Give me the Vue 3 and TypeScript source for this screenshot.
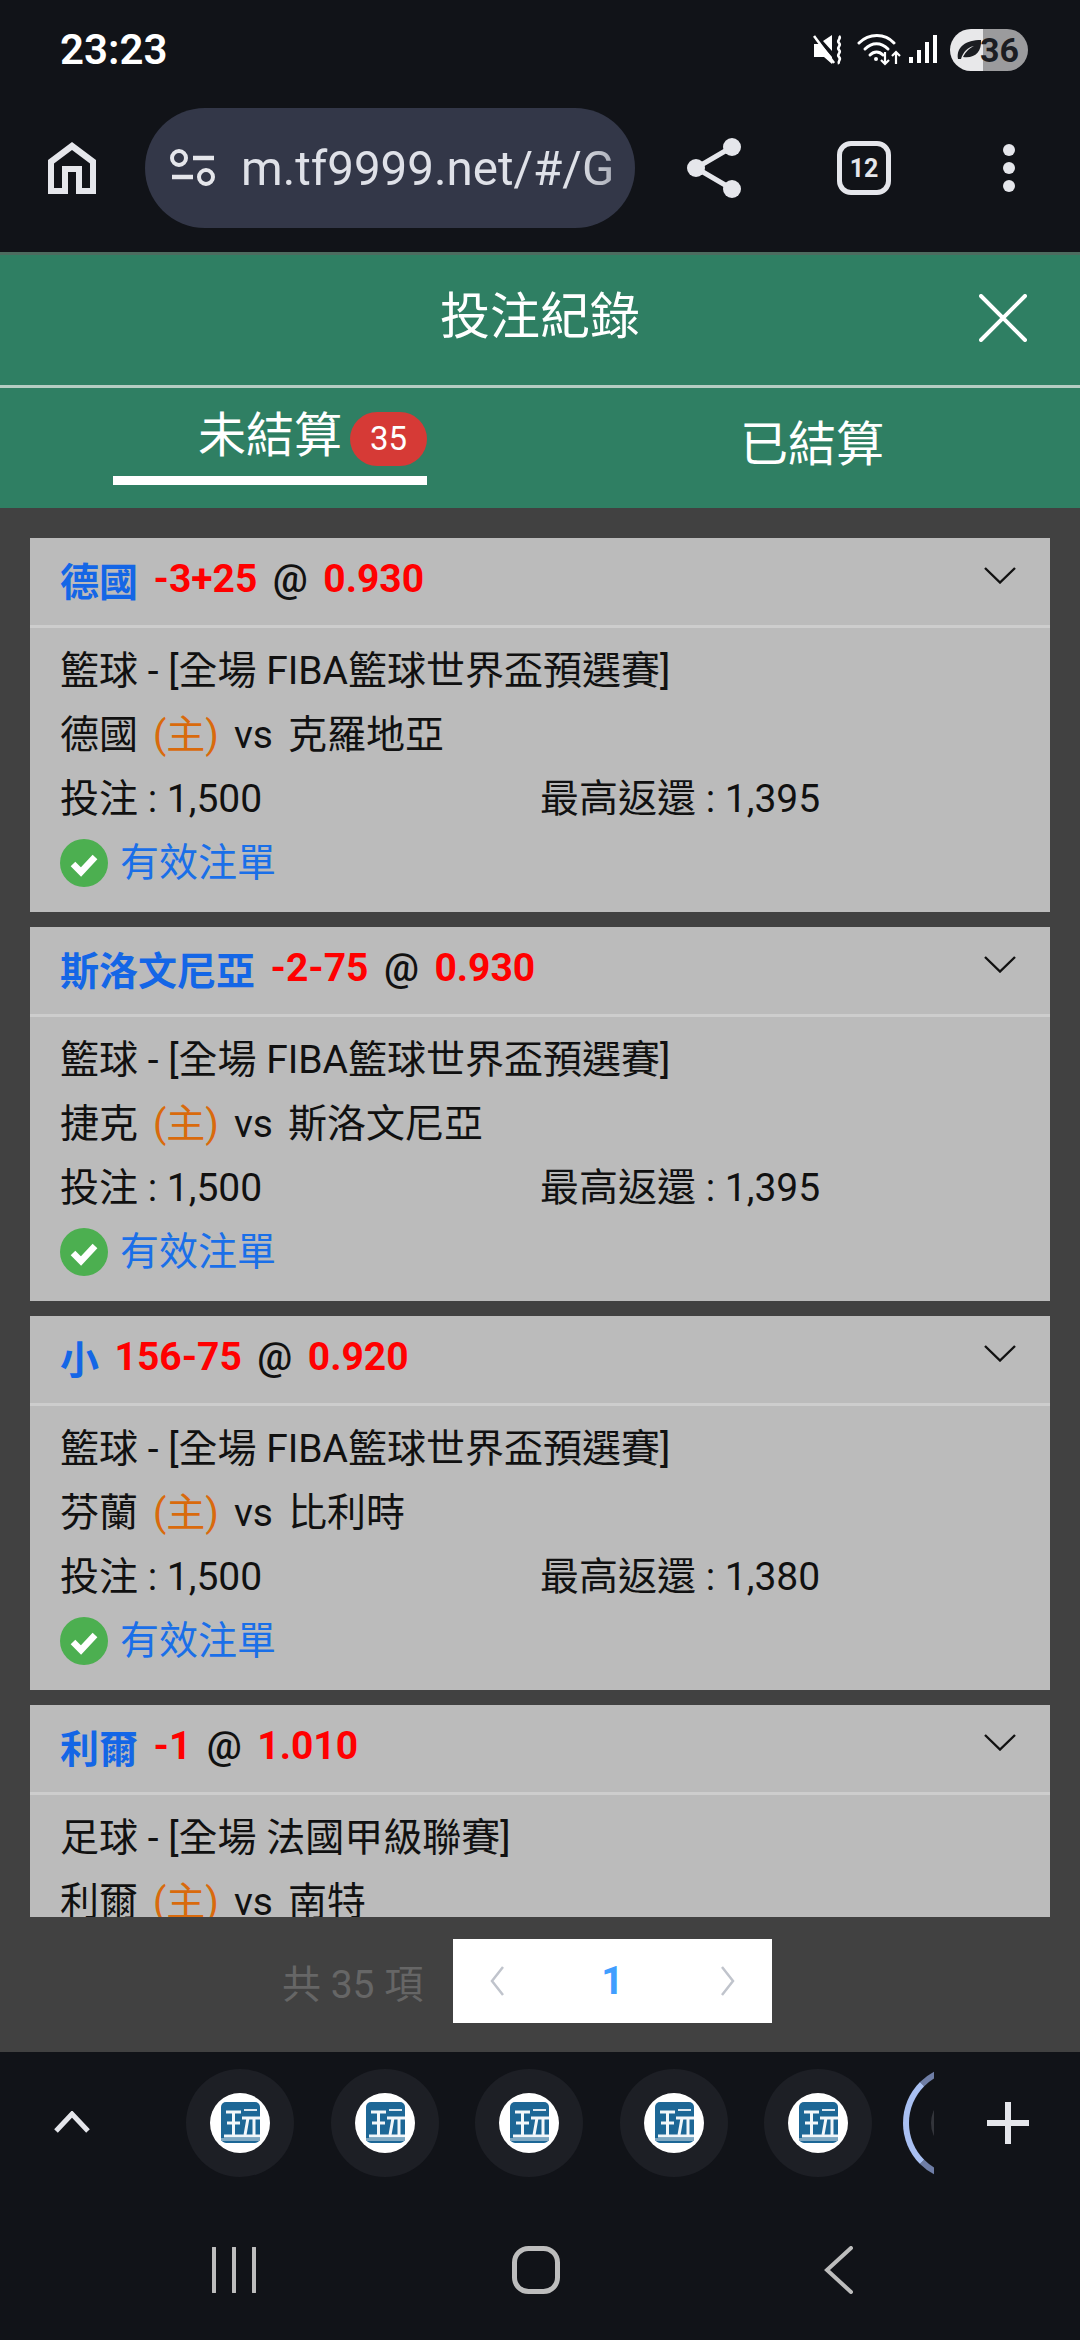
<script setup lang="ts">
interface Bet {
  pick: string
  line: string
  odds: string
  league: string
  home: string
  away: string
  stake?: string
  payout?: string
}

const bets: Bet[] = [
  { pick: '德國', line: '-3+25', odds: '0.930', league: '籃球 - [全場 FIBA籃球世界盃預選賽]', home: '德國', away: '克羅地亞', stake: '1,500', payout: '1,395' },
  { pick: '斯洛文尼亞', line: '-2-75', odds: '0.930', league: '籃球 - [全場 FIBA籃球世界盃預選賽]', home: '捷克', away: '斯洛文尼亞', stake: '1,500', payout: '1,395' },
  { pick: '小', line: '156-75', odds: '0.920', league: '籃球 - [全場 FIBA籃球世界盃預選賽]', home: '芬蘭', away: '比利時', stake: '1,500', payout: '1,380' },
  { pick: '利爾', line: '-1', odds: '1.010', league: '足球 - [全場 法國甲級聯賽]', home: '利爾', away: '南特' },
]

const tabs: number[] = [1, 2, 3, 4, 5]
</script>

<template>
  <div class="page">
    <header class="status">
      <span class="time">23:23</span>
      <div class="status-icons">
        <svg class="ic-mute" width="30" height="30" viewBox="0 0 30 30">
          <path d="M1 9h5l1-1 12 14v7l-8-7H1z M10 6l9-6v16z" fill="#fff" />
          <path d="M1 1l20 27" stroke="#fff" stroke-width="2.600" fill="none" />
          <path d="M26 1c3 3-3 4 0 7s-3 4 0 7-3 4 0 7-2 4 0 7" stroke="#fff" stroke-width="2.600" fill="none" />
        </svg>
        <svg class="ic-wifi" width="46" height="34" viewBox="0 0 46 34">
          <path d="M2 11C12 1 28 1 37 11" stroke="#fff" stroke-width="3" fill="none" stroke-linecap="round" />
          <path d="M8 17c7-7 16-7 23 0" stroke="#fff" stroke-width="3" fill="none" stroke-linecap="round" />
          <path d="M13 23c4-4 9-4 13 0" stroke="#fff" stroke-width="3" fill="none" stroke-linecap="round" />
          <circle cx="19" cy="27" r="2" fill="#fff" />
          <path d="M28 20v12M24 28l4 4 4-4M39 32V20M35 24l4-4 4 4" stroke="#fff" stroke-width="2.200" fill="none" />
        </svg>
        <svg class="ic-signal" width="28" height="30" viewBox="0 0 28 30">
          <rect x="0" y="23" width="4" height="6" fill="#fff" />
          <rect x="8" y="16" width="4" height="13" fill="#fff" />
          <rect x="16" y="8" width="4" height="21" fill="#fff" />
          <rect x="24" y="1" width="4" height="28" fill="#fff" />
        </svg>
        <div class="battery">
          <svg width="30" height="26" viewBox="0 0 30 26">
            <path d="M4 22C2 10 12 3 27 3c1 12-7 19-18 17 3-6 7-9 11-11-6 1-11 6-13 13z" fill="#1b1d22" />
          </svg>
          <span class="batt-num">36</span>
        </div>
      </div>
    </header>

    <nav class="toolbar">
      <svg class="home" width="48" height="54" viewBox="0 0 48 54">
        <path fill-rule="evenodd" d="M24 1L48 19V53H28V31H20V53H0V19z M24 9L6 22.500V47H14V25H34V47H42V22.500z" fill="#e5e6eb" />
      </svg>
      <div class="pill">
        <svg class="tune" width="46" height="38" viewBox="0 0 46 38">
          <circle cx="9" cy="9" r="7" stroke="#e5e6eb" stroke-width="4" fill="none" />
          <circle cx="36" cy="28" r="7" stroke="#e5e6eb" stroke-width="4" fill="none" />
          <path d="M23 9H44M2 28H23" stroke="#e5e6eb" stroke-width="4.500" fill="none" />
        </svg>
        <span class="url">m.tf9999.net/#/G</span>
      </div>
      <svg class="share" width="54" height="60" viewBox="0 0 54 60">
        <path d="M45 9L9 30 45 51" stroke="#e5e6eb" stroke-width="5" fill="none" />
        <circle cx="45" cy="9" r="9" fill="#e5e6eb" />
        <circle cx="9" cy="30" r="9" fill="#e5e6eb" />
        <circle cx="45" cy="51" r="9" fill="#e5e6eb" />
      </svg>
      <div class="tab-count">12</div>
      <div class="dots"><i></i><i></i><i></i></div>
    </nav>

    <main class="sheet">
      <div class="title-bar">
        <span class="title">投注紀錄</span>
        <svg class="close" width="48" height="48" viewBox="0 0 48 48">
          <path d="M2 2L46 46M46 2L2 46" stroke="#fff" stroke-width="4" stroke-linecap="round" />
        </svg>
      </div>

      <div class="tabs">
        <div class="tab-active">
          <span class="tab-label">未結算</span>
          <span class="badge">35</span>
        </div>
        <span class="tab-other">已結算</span>
      </div>

      <div class="list">
        <article v-for="bet in bets" :key="bet.pick" class="card">
          <div class="card-head">
            <span class="pick">{{ bet.pick }}</span>
            <span class="red">{{ bet.line }}</span>
            <span class="at">@</span>
            <span class="red">{{ bet.odds }}</span>
            <svg class="chev" width="32" height="17" viewBox="0 0 32 17">
              <path d="M1 1L16 15.500 31 1" stroke="#111" stroke-width="2.400" fill="none" />
            </svg>
          </div>
          <div class="card-body">
            <div class="row">{{ bet.league }}</div>
            <div class="row teams">
              <span>{{ bet.home }}</span>
              <span class="host">(主)</span>
              <span class="vs">vs</span>
              <span>{{ bet.away }}</span>
            </div>
            <template v-if="bet.stake">
              <div class="row split">
                <span>投注 : {{ bet.stake }}</span>
                <span>最高返還 : {{ bet.payout }}</span>
              </div>
              <div class="row valid">
                <svg width="48" height="48" viewBox="0 0 48 48">
                  <circle cx="24" cy="24" r="24" fill="#4caf50" />
                  <path d="M13 25l8 8 14-15" stroke="#fff" stroke-width="6.500" fill="none" />
                </svg>
                <span>有效注單</span>
              </div>
            </template>
          </div>
        </article>
      </div>

      <div class="pager">
        <span class="total">共 35 項</span>
        <div class="pager-box">
          <svg width="16" height="30" viewBox="0 0 16 30">
            <path d="M14 1L3 15l11 14" stroke="#c0c4cc" stroke-width="2.500" fill="none" />
          </svg>
          <span class="current">1</span>
          <svg width="16" height="30" viewBox="0 0 16 30">
            <path d="M2 1l11 14L2 29" stroke="#c0c4cc" stroke-width="2.500" fill="none" />
          </svg>
        </div>
      </div>
    </main>

    <section class="strip">
      <svg class="up" width="36" height="22" viewBox="0 0 36 22">
        <path d="M2 20L18 3l16 17" stroke="#e5e6eb" stroke-width="5" fill="none" />
      </svg>
      <div class="tab-scroll">
        <div v-for="t in tabs" :key="t" class="tab-circle">
          <svg width="60" height="60" viewBox="0 0 60 60">
            <circle cx="30" cy="30" r="30" fill="#fff" />
            <rect x="11" y="9" width="39" height="41" rx="5" fill="#1d6796" />
            <rect x="11" y="45" width="39" height="3" fill="#7fa8c2" />
            <path d="M16 19H31M23.500 19V42M17 30H30M14 43H50" stroke="#f3f7fa" stroke-width="3" fill="none" />
            <path d="M34 17H47" stroke="#f3f7fa" stroke-width="1.800" fill="none" />
            <path d="M32 25H50M38 25L35 42M44 25V42" stroke="#f3f7fa" stroke-width="3" fill="none" />
          </svg>
        </div>
        <div class="tab-current"><i></i></div>
      </div>
      <svg class="plus" width="42" height="42" viewBox="0 0 42 42">
        <path d="M21 0V42M0 21H42" stroke="#e5e6eb" stroke-width="6" />
      </svg>
    </section>

    <footer class="sysnav">
      <svg width="46" height="46" viewBox="0 0 46 46">
        <path d="M3 1V45M23 1V45M43 1V45" stroke="#bdbdbd" stroke-width="4" stroke-linecap="round" />
      </svg>
      <svg width="48" height="48" viewBox="0 0 48 48">
        <rect x="2.500" y="2.500" width="43" height="43" rx="14" stroke="#bdbdbd" stroke-width="5" fill="none" />
      </svg>
      <svg width="30" height="48" viewBox="0 0 30 48">
        <path d="M27 2L3 24l24 22" stroke="#bdbdbd" stroke-width="4" fill="none" stroke-linecap="round" />
      </svg>
    </footer>
  </div>
</template>

<style scoped>
.page {
  width: 1080px;
  height: 2340px;
  display: flex;
  flex-direction: column;
  background: #111318;
  overflow: hidden;
  font-family: Roboto, "Noto Sans CJK TC", sans-serif;
  color: #111;
}
.status {
  height: 84px;
  flex: none;
  display: flex;
  justify-content: space-between;
  align-items: flex-start;
  padding: 0 52px 0 60px;
}
.time {
  margin-top: 26px;
  font-size: 42px;
  line-height: 48px;
  font-weight: 600;
  color: #fff;
}
.status-icons {
  display: flex;
  align-items: center;
  margin-top: 29px;
  height: 42px;
}
.ic-mute { margin-right: 14px; }
.ic-wifi { margin-right: 6px; margin-bottom: 2px; }
.ic-signal { margin-right: 13px; margin-bottom: 2px; }
.battery {
  width: 78px;
  height: 42px;
  border-radius: 21px;
  display: flex;
  align-items: center;
  padding-left: 5px;
  box-sizing: border-box;
  background: linear-gradient(90deg, #e8e8ea 0 42%, #9b9b9d 42% 100%);
}
.battery svg { flex: none; margin-left: -1px; margin-right: -4px; }
.batt-num {
  font-size: 34px;
  font-weight: 700;
  color: #1b1d22;
  line-height: 42px;
}

.toolbar {
  height: 168px;
  flex: none;
  display: flex;
  align-items: center;
  padding-left: 48px;
  box-sizing: border-box;
}
.pill {
  margin-left: 49px;
  width: 490px;
  height: 120px;
  border-radius: 60px;
  background: #333748;
  display: flex;
  align-items: center;
  padding-left: 25px;
  box-sizing: border-box;
  overflow: hidden;
  flex: none;
}
.tune { flex: none; }
.url {
  margin-left: 25px;
  margin-top: 2px;
  font-size: 47.500px;
  color: #dfe1e8;
  white-space: nowrap;
  line-height: 60px;
  -webkit-mask-image: linear-gradient(90deg, #000 90%, rgba(0, 0, 0, 0.7));
  mask-image: linear-gradient(90deg, #000 90%, rgba(0, 0, 0, 0.7));
}
.share { margin-left: 52px; flex: none; }
.tab-count {
  margin-left: 96px;
  width: 54px;
  height: 54px;
  box-sizing: border-box;
  border: 5px solid #e5e6eb;
  border-radius: 14px;
  color: #e5e6eb;
  font-size: 25px;
  font-weight: 700;
  display: flex;
  align-items: center;
  justify-content: center;
  flex: none;
}
.dots {
  margin-left: 112px;
  display: flex;
  flex-direction: column;
  gap: 6px;
}
.dots i {
  display: block;
  width: 12px;
  height: 12px;
  border-radius: 50%;
  background: #e5e6eb;
}

.sheet {
  flex: none;
  height: 1800px;
  display: flex;
  flex-direction: column;
  background: #414141;
  border-top: 3px solid #4d6b5f;
  box-sizing: border-box;
}
.title-bar {
  height: 130px;
  flex: none;
  background: #2f7f63;
  display: flex;
  align-items: center;
  justify-content: center;
  position: relative;
  border-bottom: 3px solid #b5cdc3;
  box-sizing: content-box;
}
.title {
  font-size: 50px;
  line-height: 60px;
  color: #fff;
  margin-top: -6px;
}
.close {
  position: absolute;
  right: 53px;
  top: 39px;
}
.tabs {
  height: 120px;
  flex: none;
  background: #2f7f63;
  display: flex;
  color: #fff;
  font-size: 48px;
  position: relative;
}
.tab-active {
  margin-left: 113px;
  width: 314px;
  height: 97px;
  border-bottom: 9px solid #fff;
  box-sizing: border-box;
  display: flex;
  align-items: flex-start;
  padding-left: 85px;
}
.tab-label {
  line-height: 60px;
  margin-top: 18px;
  white-space: nowrap;
}
.badge {
  margin-left: 8px;
  margin-top: 24px;
  width: 77px;
  height: 54px;
  border-radius: 27px;
  background: #d63a36;
  font-size: 33px;
  line-height: 54px;
  text-align: center;
  flex: none;
}
.tab-other {
  margin-left: 313px;
  line-height: 60px;
  margin-top: 27px;
  height: 60px;
  white-space: nowrap;
}

.list {
  flex: 1;
  min-height: 0;
  overflow: hidden;
  padding: 30px 30px 0;
  display: flex;
  flex-direction: column;
  gap: 15px;
}
.card {
  flex: none;
  background: #bbbbbb;
  height: 374px;
}
.card-head {
  height: 87px;
  box-sizing: content-box;
  border-bottom: 3px solid #cdcdcd;
  display: flex;
  align-items: center;
  padding: 0 34px 0 30px;
  font-size: 39px;
  font-weight: 700;
  gap: 15.500px;
}
.card-head > * { position: relative; top: -3px; }
.pick { color: #1466e6; }
.red { color: #f00; }
.at { color: #111; font-weight: 500; }
.chev { margin-left: auto; margin-bottom: 6px; }
.card-body {
  padding: 11px 30px 0;
  font-size: 39px;
}
.row {
  height: 64px;
  line-height: 64px;
  white-space: nowrap;
  color: #111;
}
.teams {
  display: flex;
  gap: 15px;
}
.host { color: #d96a0c; }
.split {
  display: grid;
  grid-template-columns: 1fr 1fr;
}
.valid {
  display: flex;
  align-items: center;
  gap: 12px;
  color: #1a6fe8;
}

.pager {
  height: 135px;
  flex: none;
  display: flex;
  align-items: center;
  padding: 0 0 7px 282px;
  box-sizing: border-box;
  background: #414141;
}
.total {
  font-size: 39px;
  color: #666;
  width: 171px;
  white-space: nowrap;
}
.pager-box {
  width: 319px;
  height: 84px;
  background: #fff;
  display: flex;
  align-items: center;
  justify-content: space-between;
  padding: 0 36px;
  box-sizing: border-box;
}
.current {
  color: #409eff;
  font-size: 39px;
  font-weight: 700;
}

.strip {
  height: 142px;
  flex: none;
  display: flex;
  align-items: center;
  padding: 0 51px 0 54px;
  box-sizing: border-box;
}
.up { flex: none; margin-top: -2px; margin-right: 96px; }
.tab-scroll {
  width: 748px;
  height: 118px;
  display: flex;
  align-items: center;
  gap: 36.600px;
  overflow: hidden;
  flex: none;
}
.tab-circle {
  width: 108px;
  height: 108px;
  border-radius: 50%;
  background: #1d1f25;
  display: flex;
  align-items: center;
  justify-content: center;
  flex: none;
}
.tab-current {
  width: 104px;
  height: 104px;
  border-radius: 50%;
  flex: none;
  margin-left: -6px;
  border: 6px solid #a9c0f2;
  border-right-color: #11131a;
  border-top-color: #6f7ea6;
  border-bottom-color: #6f7ea6;
  box-sizing: content-box;
  display: flex;
  align-items: center;
  justify-content: center;
}
.tab-current i {
  width: 60px;
  height: 60px;
  border-radius: 50%;
  background: #33353b;
  display: block;
}
.plus { flex: none; margin-left: 53px; }

.sysnav {
  flex: none;
  display: flex;
  align-items: center;
  padding: 52px 0 0 211px;
}
.sysnav svg:nth-child(2) { margin-left: 255px; }
.sysnav svg:nth-child(3) { margin-left: 264px; }
</style>
